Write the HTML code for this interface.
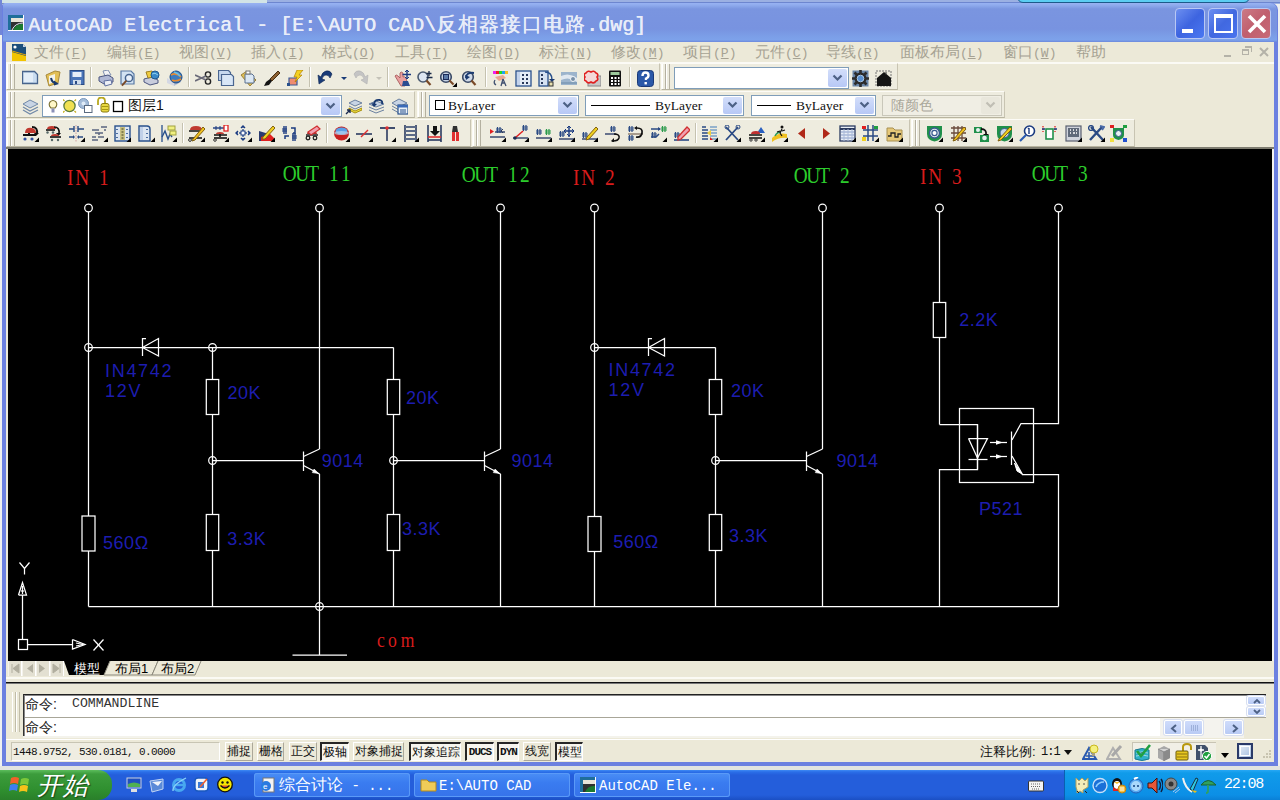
<!DOCTYPE html>
<html><head><meta charset="utf-8"><title>AutoCAD Electrical</title>
<style>
*{margin:0;padding:0;box-sizing:border-box}
html,body{width:1280px;height:800px;overflow:hidden}
body{position:relative;background:#eef0f0;font-family:"Liberation Sans",sans-serif}
.a{position:absolute}
.mono{font-family:"Liberation Mono",monospace}
.serif{font-family:"Liberation Serif",serif}
</style></head><body>

<div class="a" style="left:0;top:0;width:267px;height:4px;background:#d2e4e6;border-bottom:1px solid #7e9aa8"></div>
<div class="a" style="left:267px;top:0;width:1013px;height:4px;background:#9bb0e2"></div>
<div class="a" style="left:267px;top:2px;width:1013px;height:1px;background:#6d86cf"></div>
<div class="a" style="left:1017px;top:-6px;width:233px;height:9px;background:#5bcdf2;border:1px solid #1d5a8a;border-radius:0 0 6px 6px"></div>
<div class="a" style="left:0;top:0;width:2px;height:35px;background:#7186d8"></div>
<div class="a" style="left:2px;top:3px;width:1276px;height:763px;background:#6b80e0;border-radius:3px 7px 0 0"></div>
<div class="a" style="left:3px;top:3px;width:1274px;height:39px;border-radius:2px 7px 0 0;background:linear-gradient(#98b2f2 0px,#90acee 2px,#7a95e0 6px,#7893e0 26px,#7c9fe8 34px,#7da2ea 37px,#6c88dc 39px)"></div>
<div class="a" style="left:6px;top:42px;width:1268px;height:720px;background:#ece9d8"></div>
<div class="a" style="left:1272px;top:149px;width:2px;height:512px;background:#f4f3ee"></div>
<svg class="a" style="left:8px;top:15px" width="17" height="17" viewBox="0 0 17 17">
<rect x="0" y="0" width="16" height="16" fill="#fff"/>
<rect x="0" y="0" width="15" height="15" fill="#1f6e9a"/>
<rect x="3" y="3" width="12" height="4" fill="#e8e4d8"/>
<rect x="3" y="7" width="12" height="8" fill="#303030"/>
<path d="M5 15 Q8 8 15 9 L15 15Z" fill="#1b7a30"/>
<path d="M4 15 Q7 8 15 8" stroke="#dde" stroke-width="1" fill="none"/>
</svg>
<div class="a mono" style="left:28px;top:12px;font-size:20px;line-height:24px;color:#e8edf9;white-space:nowrap;text-shadow:0.5px 0 0 #e8edf9">AutoCAD Electrical - [E:\AUTO CAD\<span style="font-family:'Liberation Sans', sans-serif;font-size:20px;letter-spacing:1.43px">反相器接口电路</span>.dwg]</div>
<div class="a" style="left:1175px;top:8px;width:30px;height:31px;border:1px solid #b9c8f4;border-radius:4px;background:linear-gradient(135deg,#6d8ff0,#3d64e0 50%,#4a78f2)"><div class="a" style="left:6px;top:20px;width:11px;height:4px;background:#fff"></div></div>
<div class="a" style="left:1208px;top:8px;width:30px;height:31px;border:1px solid #b9c8f4;border-radius:4px;background:linear-gradient(135deg,#6d8ff0,#4168e0 50%,#4a74ee)"><div class="a" style="left:5px;top:5px;width:19px;height:19px;border:2px solid #fff;border-top-width:4px"></div></div>
<div class="a" style="left:1241px;top:8px;width:30px;height:31px;border:1px solid #b9c8f4;border-radius:4px;background:linear-gradient(135deg,#cc7a86,#c05f6e 50%,#c86a78)"><svg class="a" style="left:4px;top:4px" width="22" height="22"><path d="M3 3L19 19M19 3L3 19" stroke="#fff" stroke-width="3.6"/></svg></div>
<div class="a" style="left:6px;top:62px;width:1268px;height:2px;background:#fbfaf5"></div>
<svg class="a" style="left:11px;top:43px" width="17" height="19" viewBox="0 0 17 19">
<path d="M2 1 L12 1 L15 4 L15 17 L1 17 L1 1Z" fill="#1d4f7a"/>
<path d="M12 1 L15 4 L12 4Z" fill="#c8d4e4"/>
<path d="M1 9 L15 13 L15 18 L1 18Z" fill="#f2c400"/>
<path d="M1 8 L15 12" stroke="#e8a800" stroke-width="1"/>
<circle cx="4" cy="4" r="1.6" fill="#fff"/>
</svg>
<div class="a" style="left:34px;top:43px;height:18px;line-height:18px;color:#a6a293;white-space:nowrap"><span style="font-family:'Liberation Sans', sans-serif;font-size:15px">文件</span><span class="mono" style="font-size:13px">(<span style="text-decoration:underline">F</span>)</span></div>
<div class="a" style="left:107px;top:43px;height:18px;line-height:18px;color:#a6a293;white-space:nowrap"><span style="font-family:'Liberation Sans', sans-serif;font-size:15px">编辑</span><span class="mono" style="font-size:13px">(<span style="text-decoration:underline">E</span>)</span></div>
<div class="a" style="left:179px;top:43px;height:18px;line-height:18px;color:#a6a293;white-space:nowrap"><span style="font-family:'Liberation Sans', sans-serif;font-size:15px">视图</span><span class="mono" style="font-size:13px">(<span style="text-decoration:underline">V</span>)</span></div>
<div class="a" style="left:251px;top:43px;height:18px;line-height:18px;color:#a6a293;white-space:nowrap"><span style="font-family:'Liberation Sans', sans-serif;font-size:15px">插入</span><span class="mono" style="font-size:13px">(<span style="text-decoration:underline">I</span>)</span></div>
<div class="a" style="left:322px;top:43px;height:18px;line-height:18px;color:#a6a293;white-space:nowrap"><span style="font-family:'Liberation Sans', sans-serif;font-size:15px">格式</span><span class="mono" style="font-size:13px">(<span style="text-decoration:underline">O</span>)</span></div>
<div class="a" style="left:395px;top:43px;height:18px;line-height:18px;color:#a6a293;white-space:nowrap"><span style="font-family:'Liberation Sans', sans-serif;font-size:15px">工具</span><span class="mono" style="font-size:13px">(<span style="text-decoration:underline">T</span>)</span></div>
<div class="a" style="left:467px;top:43px;height:18px;line-height:18px;color:#a6a293;white-space:nowrap"><span style="font-family:'Liberation Sans', sans-serif;font-size:15px">绘图</span><span class="mono" style="font-size:13px">(<span style="text-decoration:underline">D</span>)</span></div>
<div class="a" style="left:539px;top:43px;height:18px;line-height:18px;color:#a6a293;white-space:nowrap"><span style="font-family:'Liberation Sans', sans-serif;font-size:15px">标注</span><span class="mono" style="font-size:13px">(<span style="text-decoration:underline">N</span>)</span></div>
<div class="a" style="left:611px;top:43px;height:18px;line-height:18px;color:#a6a293;white-space:nowrap"><span style="font-family:'Liberation Sans', sans-serif;font-size:15px">修改</span><span class="mono" style="font-size:13px">(<span style="text-decoration:underline">M</span>)</span></div>
<div class="a" style="left:683px;top:43px;height:18px;line-height:18px;color:#a6a293;white-space:nowrap"><span style="font-family:'Liberation Sans', sans-serif;font-size:15px">项目</span><span class="mono" style="font-size:13px">(<span style="text-decoration:underline">P</span>)</span></div>
<div class="a" style="left:755px;top:43px;height:18px;line-height:18px;color:#a6a293;white-space:nowrap"><span style="font-family:'Liberation Sans', sans-serif;font-size:15px">元件</span><span class="mono" style="font-size:13px">(<span style="text-decoration:underline">C</span>)</span></div>
<div class="a" style="left:826px;top:43px;height:18px;line-height:18px;color:#a6a293;white-space:nowrap"><span style="font-family:'Liberation Sans', sans-serif;font-size:15px">导线</span><span class="mono" style="font-size:13px">(<span style="text-decoration:underline">R</span>)</span></div>
<div class="a" style="left:900px;top:43px;height:18px;line-height:18px;color:#a6a293;white-space:nowrap"><span style="font-family:'Liberation Sans', sans-serif;font-size:15px">面板布局</span><span class="mono" style="font-size:13px">(<span style="text-decoration:underline">L</span>)</span></div>
<div class="a" style="left:1003px;top:43px;height:18px;line-height:18px;color:#a6a293;white-space:nowrap"><span style="font-family:'Liberation Sans', sans-serif;font-size:15px">窗口</span><span class="mono" style="font-size:13px">(<span style="text-decoration:underline">W</span>)</span></div>
<div class="a" style="left:1076px;top:43px;height:18px;line-height:18px;color:#a6a293;white-space:nowrap"><span style="font-family:'Liberation Sans', sans-serif;font-size:15px">帮助</span></div>
<div class="a" style="left:1224px;top:55px;width:7px;height:2px;background:#b4b2a8"></div>
<div class="a" style="left:1242px;top:49px;width:7px;height:6px;border:1px solid #b4b2a8;border-top-width:2px"></div>
<div class="a" style="left:1245px;top:46px;width:7px;height:6px;border:1px solid #b4b2a8;border-top-width:2px;border-left:none;border-bottom:none"></div>
<svg class="a" style="left:1259px;top:47px" width="10" height="10"><path d="M1 1L9 9M9 1L1 9" stroke="#b4b2a8" stroke-width="2"/></svg>
<div class="a" style="left:6px;top:63px;width:654px;height:27px;background:#eeecdf;border-top:1px solid #fcfbf6;border-left:1px solid #fcfbf6;border-bottom:1px solid #b8b4a0;border-right:1px solid #c8c4b2"></div>
<div class="a" style="left:7px;top:64px;width:4px;height:25px;border-left:1px solid #fff;border-right:1px solid #b4b0a0"></div>
<div class="a" style="left:11px;top:64px;width:4px;height:25px;border-left:1px solid #fff;border-right:1px solid #b4b0a0"></div>
<div class="a" style="left:661px;top:63px;width:237px;height:27px;background:#eeecdf;border-top:1px solid #fcfbf6;border-left:1px solid #fcfbf6;border-bottom:1px solid #b8b4a0;border-right:1px solid #c8c4b2"></div>
<div class="a" style="left:662px;top:64px;width:4px;height:25px;border-left:1px solid #fff;border-right:1px solid #b4b0a0"></div>
<div class="a" style="left:666px;top:64px;width:4px;height:25px;border-left:1px solid #fff;border-right:1px solid #b4b0a0"></div>
<div class="a" style="left:6px;top:91px;width:409px;height:27px;background:#eeecdf;border-top:1px solid #fcfbf6;border-left:1px solid #fcfbf6;border-bottom:1px solid #b8b4a0;border-right:1px solid #c8c4b2"></div>
<div class="a" style="left:7px;top:92px;width:4px;height:25px;border-left:1px solid #fff;border-right:1px solid #b4b0a0"></div>
<div class="a" style="left:11px;top:92px;width:4px;height:25px;border-left:1px solid #fff;border-right:1px solid #b4b0a0"></div>
<div class="a" style="left:417px;top:91px;width:588px;height:27px;background:#eeecdf;border-top:1px solid #fcfbf6;border-left:1px solid #fcfbf6;border-bottom:1px solid #b8b4a0;border-right:1px solid #c8c4b2"></div>
<div class="a" style="left:418px;top:92px;width:4px;height:25px;border-left:1px solid #fff;border-right:1px solid #b4b0a0"></div>
<div class="a" style="left:422px;top:92px;width:4px;height:25px;border-left:1px solid #fff;border-right:1px solid #b4b0a0"></div>
<div class="a" style="left:6px;top:119px;width:465px;height:28px;background:#eeecdf;border-top:1px solid #fcfbf6;border-left:1px solid #fcfbf6;border-bottom:1px solid #b8b4a0;border-right:1px solid #c8c4b2"></div>
<div class="a" style="left:7px;top:120px;width:4px;height:26px;border-left:1px solid #fff;border-right:1px solid #b4b0a0"></div>
<div class="a" style="left:11px;top:120px;width:4px;height:26px;border-left:1px solid #fff;border-right:1px solid #b4b0a0"></div>
<div class="a" style="left:472px;top:119px;width:438px;height:28px;background:#eeecdf;border-top:1px solid #fcfbf6;border-left:1px solid #fcfbf6;border-bottom:1px solid #b8b4a0;border-right:1px solid #c8c4b2"></div>
<div class="a" style="left:473px;top:120px;width:4px;height:26px;border-left:1px solid #fff;border-right:1px solid #b4b0a0"></div>
<div class="a" style="left:477px;top:120px;width:4px;height:26px;border-left:1px solid #fff;border-right:1px solid #b4b0a0"></div>
<div class="a" style="left:911px;top:119px;width:224px;height:28px;background:#eeecdf;border-top:1px solid #fcfbf6;border-left:1px solid #fcfbf6;border-bottom:1px solid #b8b4a0;border-right:1px solid #c8c4b2"></div>
<div class="a" style="left:912px;top:120px;width:4px;height:26px;border-left:1px solid #fff;border-right:1px solid #b4b0a0"></div>
<div class="a" style="left:916px;top:120px;width:4px;height:26px;border-left:1px solid #fff;border-right:1px solid #b4b0a0"></div>
<div class="a" style="left:6px;top:147px;width:1268px;height:2px;background:#7e7c70"></div>
<div class="a" style="left:674px;top:67px;width:175px;height:22px;background:#fff;border:1px solid #7f9db9"><div class="a" style="right:1px;top:1px;width:19px;height:18px;background:linear-gradient(#d3defa,#b7c8f6);border-radius:2px"><svg class="a" style="left:4px;top:5px" width="11" height="8"><path d="M1.5 1.5L5.5 5.5L9.5 1.5" stroke="#4d6185" stroke-width="2.2" fill="none"/></svg></div></div>
<div class="a" style="left:42px;top:95px;width:300px;height:22px;background:#fff;border:1px solid #7f9db9"><div class="a" style="right:1px;top:1px;width:19px;height:18px;background:linear-gradient(#d3defa,#b7c8f6);border-radius:2px"><svg class="a" style="left:4px;top:5px" width="11" height="8"><path d="M1.5 1.5L5.5 5.5L9.5 1.5" stroke="#4d6185" stroke-width="2.2" fill="none"/></svg></div></div>
<div class="a" style="left:429px;top:95px;width:150px;height:21px;background:#fff;border:1px solid #7f9db9"><div class="a" style="left:5px;top:4px;width:10px;height:10px;border:1px solid #000"></div><div class="a serif" style="left:18px;top:2px;font-size:13.5px;color:#111;line-height:16px">ByLayer</div><div class="a" style="right:1px;top:1px;width:19px;height:17px;background:linear-gradient(#d3defa,#b7c8f6);border-radius:2px"><svg class="a" style="left:4px;top:4px" width="11" height="8"><path d="M1.5 1.5L5.5 5.5L9.5 1.5" stroke="#4d6185" stroke-width="2.2" fill="none"/></svg></div></div>
<div class="a" style="left:585px;top:95px;width:159px;height:21px;background:#fff;border:1px solid #7f9db9"><div class="a" style="left:5px;top:9px;width:59px;height:1px;background:#000"></div><div class="a serif" style="left:69px;top:2px;font-size:13.5px;color:#111;line-height:16px">ByLayer</div><div class="a" style="right:1px;top:1px;width:19px;height:17px;background:linear-gradient(#d3defa,#b7c8f6);border-radius:2px"><svg class="a" style="left:4px;top:4px" width="11" height="8"><path d="M1.5 1.5L5.5 5.5L9.5 1.5" stroke="#4d6185" stroke-width="2.2" fill="none"/></svg></div></div>
<div class="a" style="left:751px;top:95px;width:125px;height:21px;background:#fff;border:1px solid #7f9db9"><div class="a" style="left:5px;top:9px;width:34px;height:1px;background:#000"></div><div class="a serif" style="left:44px;top:2px;font-size:13.5px;color:#111;line-height:16px">ByLayer</div><div class="a" style="right:1px;top:1px;width:19px;height:17px;background:linear-gradient(#d3defa,#b7c8f6);border-radius:2px"><svg class="a" style="left:4px;top:4px" width="11" height="8"><path d="M1.5 1.5L5.5 5.5L9.5 1.5" stroke="#4d6185" stroke-width="2.2" fill="none"/></svg></div></div>
<div class="a" style="left:882px;top:95px;width:120px;height:21px;background:#f0eee4;border:1px solid #c9c7ba"><div class="a" style="left:8px;top:1px;font-size:14px;color:#aaa79a;line-height:17px;font-family:'Liberation Sans', sans-serif">随颜色</div><div class="a" style="right:1px;top:1px;width:19px;height:17px;background:#e9e7dc;border-radius:2px"><svg class="a" style="left:4px;top:4px" width="11" height="8"><path d="M1.5 1.5L5.5 5.5L9.5 1.5" stroke="#c0beb4" stroke-width="2.2" fill="none"/></svg></div></div>
<div class="a" style="left:8px;top:149px;width:1264px;height:512px;background:#000"></div>
<svg class="a" style="left:0;top:0" width="1280" height="800" viewBox="0 0 1280 800"><g stroke="#fff" stroke-width="1.25" fill="none"><line x1="88.50" y1="208.00" x2="88.50" y2="606.50"/><line x1="88.50" y1="347.50" x2="393.50" y2="347.50"/><line x1="393.50" y1="347.50" x2="393.50" y2="606.50"/><line x1="212.50" y1="347.50" x2="212.50" y2="606.50"/><line x1="319.50" y1="208.00" x2="319.50" y2="449.00"/><line x1="319.50" y1="474.00" x2="319.50" y2="655.00"/><line x1="500.50" y1="208.00" x2="500.50" y2="449.00"/><line x1="500.50" y1="474.00" x2="500.50" y2="606.50"/><line x1="88.50" y1="606.50" x2="1058.50" y2="606.50"/><line x1="292.50" y1="655.00" x2="347.00" y2="655.00"/><line x1="212.50" y1="460.50" x2="303.50" y2="460.50"/><line x1="393.50" y1="460.50" x2="484.50" y2="460.50"/><line x1="594.50" y1="208.00" x2="594.50" y2="606.50"/><line x1="594.50" y1="347.50" x2="715.50" y2="347.50"/><line x1="715.50" y1="347.50" x2="715.50" y2="606.50"/><line x1="822.50" y1="208.00" x2="822.50" y2="449.00"/><line x1="822.50" y1="474.00" x2="822.50" y2="606.50"/><line x1="715.50" y1="460.50" x2="806.50" y2="460.50"/><line x1="939.50" y1="208.00" x2="939.50" y2="424.50"/><polyline points="939.50,424.50 977.50,424.50 977.50,469.50 939.50,469.50 939.50,606.50" fill="none"/><polyline points="1058.50,208.00 1058.50,423.50 1021.00,423.50 1012.00,440.00" fill="none"/><polyline points="1012.00,456.00 1022.50,474.50 1058.50,474.50 1058.50,606.50" fill="none"/><rect x="82.00" y="516.00" width="13.00" height="35.00" fill="#000"/><rect x="206.30" y="379.50" width="12.40" height="35.00" fill="#000"/><rect x="206.30" y="514.50" width="12.40" height="36.00" fill="#000"/><rect x="387.30" y="379.50" width="12.40" height="35.00" fill="#000"/><rect x="387.30" y="514.50" width="12.40" height="36.00" fill="#000"/><rect x="588.00" y="516.50" width="13.00" height="35.00" fill="#000"/><rect x="709.30" y="379.50" width="12.40" height="35.00" fill="#000"/><rect x="709.30" y="514.50" width="12.40" height="36.00" fill="#000"/><rect x="933.30" y="302.50" width="12.40" height="35.00" fill="#000"/><polyline points="146.00,338.50 142.50,338.50 142.50,356.00" fill="none"/><polyline points="142.50,347.50 158.50,338.50 158.50,356.00 142.50,347.50" fill="none"/><polyline points="652.00,338.50 648.50,338.50 648.50,356.00" fill="none"/><polyline points="648.50,347.50 664.50,338.50 664.50,356.00 648.50,347.50" fill="none"/><line x1="303.50" y1="451.50" x2="303.50" y2="471.00"/><line x1="303.50" y1="456.50" x2="319.50" y2="449.00"/><line x1="303.50" y1="465.50" x2="319.50" y2="474.00"/><path d="M318.70 473.6 L312.30 472.6 L314.10 469.0Z" fill="#fff" stroke="#fff" stroke-width="0.6"/><line x1="484.50" y1="451.50" x2="484.50" y2="471.00"/><line x1="484.50" y1="456.50" x2="500.50" y2="449.00"/><line x1="484.50" y1="465.50" x2="500.50" y2="474.00"/><path d="M499.70 473.6 L493.30 472.6 L495.10 469.0Z" fill="#fff" stroke="#fff" stroke-width="0.6"/><line x1="806.50" y1="451.50" x2="806.50" y2="471.00"/><line x1="806.50" y1="456.50" x2="822.50" y2="449.00"/><line x1="806.50" y1="465.50" x2="822.50" y2="474.00"/><path d="M821.70 473.6 L815.30 472.6 L817.10 469.0Z" fill="#fff" stroke="#fff" stroke-width="0.6"/><circle cx="88.50" cy="208.00" r="3.80" fill="#000"/><circle cx="319.50" cy="208.00" r="3.80" fill="#000"/><circle cx="500.50" cy="208.00" r="3.80" fill="#000"/><circle cx="594.50" cy="208.00" r="3.80" fill="#000"/><circle cx="822.50" cy="208.00" r="3.80" fill="#000"/><circle cx="939.50" cy="208.00" r="3.80" fill="#000"/><circle cx="1058.50" cy="208.00" r="3.80" fill="#000"/><circle cx="88.50" cy="347.50" r="3.80" fill="none"/><circle cx="212.50" cy="347.50" r="3.80" fill="none"/><circle cx="594.50" cy="347.50" r="3.80" fill="none"/><circle cx="212.50" cy="460.50" r="3.80" fill="none"/><circle cx="393.50" cy="460.50" r="3.80" fill="none"/><circle cx="715.50" cy="460.50" r="3.80" fill="none"/><circle cx="319.50" cy="606.50" r="3.80" fill="none"/><rect x="959.50" y="408.50" width="74.00" height="74.00" fill="none"/><polyline points="968.50,438.50 987.50,438.50 977.50,458.00 968.50,438.50" fill="none"/><line x1="968.50" y1="459.50" x2="987.50" y2="459.50"/><line x1="977.50" y1="424.50" x2="977.50" y2="469.50"/><line x1="990.00" y1="442.50" x2="1007.00" y2="442.50"/><path d="M996 440.3 L1003 442.5 L996 444.7 Z" fill="#fff" stroke="none"/><line x1="990.00" y1="456.50" x2="1007.00" y2="456.50"/><path d="M996 454.3 L1003 456.5 L996 458.7 Z" fill="#fff" stroke="none"/><line x1="1011.50" y1="431.50" x2="1011.50" y2="465.00"/><path d="M1014.5 463 L1022 474 L1017 471 Z" fill="#fff" stroke="#fff" stroke-width="1"/><rect x="18.50" y="639.50" width="9.00" height="10.00" fill="#000"/><line x1="22.50" y1="639.50" x2="22.50" y2="595.00"/><polyline points="18.50,595.00 26.50,595.00 22.50,582.50 18.50,595.00" fill="none"/><line x1="22.50" y1="586.00" x2="22.50" y2="594.00"/><line x1="21.00" y1="591.00" x2="24.00" y2="591.00"/><line x1="28.00" y1="644.50" x2="72.50" y2="644.50"/><polyline points="72.50,639.50 72.50,649.00 85.00,644.50 72.50,639.50" fill="none"/><line x1="76.00" y1="643.00" x2="83.00" y2="644.50"/><line x1="76.00" y1="646.00" x2="83.00" y2="644.50"/><polyline points="19.50,562.50 24.50,568.50 29.50,562.50" fill="none"/><line x1="24.50" y1="568.50" x2="24.50" y2="574.50"/><line x1="93.50" y1="639.50" x2="103.50" y2="650.50"/><line x1="103.50" y1="639.50" x2="93.50" y2="650.50"/></g></svg><div class="a serif" style="left:63.0px;top:166.5px;font-size:23.0px;line-height:22px;color:#d81c1c;white-space:nowrap"><span style="display:inline-block;width:11.50px;text-align:center"><span style="display:inline-block;transform:translateX(1.5px) scaleX(0.84)">I</span></span><span style="display:inline-block;width:11.50px;text-align:center"><span style="display:inline-block;transform:translateX(-1.0px) scaleX(0.84)">N</span></span><span style="display:inline-block;width:11.50px;text-align:center"><span style="display:inline-block;transform:translateX(0.0px) scaleX(0.84)">&nbsp;</span></span><span style="display:inline-block;width:11.50px;text-align:center"><span style="display:inline-block;transform:translateX(0.0px) scaleX(0.84)">1</span></span></div><div class="a serif" style="left:282.1px;top:163.0px;font-size:23.0px;line-height:22px;color:#2ccc2c;white-space:nowrap"><span style="display:inline-block;width:11.50px;text-align:center"><span style="display:inline-block;transform:translateX(-0.5px) scaleX(0.84)">O</span></span><span style="display:inline-block;width:11.50px;text-align:center"><span style="display:inline-block;transform:translateX(0.0px) scaleX(0.84)">U</span></span><span style="display:inline-block;width:11.50px;text-align:center"><span style="display:inline-block;transform:translateX(1.0px) scaleX(0.84)">T</span></span><span style="display:inline-block;width:11.50px;text-align:center"><span style="display:inline-block;transform:translateX(0.0px) scaleX(0.84)">&nbsp;</span></span><span style="display:inline-block;width:11.50px;text-align:center"><span style="display:inline-block;transform:translateX(0.0px) scaleX(0.84)">1</span></span><span style="display:inline-block;width:11.50px;text-align:center"><span style="display:inline-block;transform:translateX(0.0px) scaleX(0.84)">1</span></span></div><div class="a serif" style="left:461.4px;top:163.5px;font-size:23.0px;line-height:22px;color:#2ccc2c;white-space:nowrap"><span style="display:inline-block;width:11.50px;text-align:center"><span style="display:inline-block;transform:translateX(-0.5px) scaleX(0.84)">O</span></span><span style="display:inline-block;width:11.50px;text-align:center"><span style="display:inline-block;transform:translateX(0.0px) scaleX(0.84)">U</span></span><span style="display:inline-block;width:11.50px;text-align:center"><span style="display:inline-block;transform:translateX(1.0px) scaleX(0.84)">T</span></span><span style="display:inline-block;width:11.50px;text-align:center"><span style="display:inline-block;transform:translateX(0.0px) scaleX(0.84)">&nbsp;</span></span><span style="display:inline-block;width:11.50px;text-align:center"><span style="display:inline-block;transform:translateX(0.0px) scaleX(0.84)">1</span></span><span style="display:inline-block;width:11.50px;text-align:center"><span style="display:inline-block;transform:translateX(0.0px) scaleX(0.84)">2</span></span></div><div class="a serif" style="left:569.0px;top:166.5px;font-size:23.0px;line-height:22px;color:#d81c1c;white-space:nowrap"><span style="display:inline-block;width:11.50px;text-align:center"><span style="display:inline-block;transform:translateX(1.5px) scaleX(0.84)">I</span></span><span style="display:inline-block;width:11.50px;text-align:center"><span style="display:inline-block;transform:translateX(-1.0px) scaleX(0.84)">N</span></span><span style="display:inline-block;width:11.50px;text-align:center"><span style="display:inline-block;transform:translateX(0.0px) scaleX(0.84)">&nbsp;</span></span><span style="display:inline-block;width:11.50px;text-align:center"><span style="display:inline-block;transform:translateX(0.0px) scaleX(0.84)">2</span></span></div><div class="a serif" style="left:793.2px;top:164.5px;font-size:23.0px;line-height:22px;color:#2ccc2c;white-space:nowrap"><span style="display:inline-block;width:11.50px;text-align:center"><span style="display:inline-block;transform:translateX(-0.5px) scaleX(0.84)">O</span></span><span style="display:inline-block;width:11.50px;text-align:center"><span style="display:inline-block;transform:translateX(0.0px) scaleX(0.84)">U</span></span><span style="display:inline-block;width:11.50px;text-align:center"><span style="display:inline-block;transform:translateX(1.0px) scaleX(0.84)">T</span></span><span style="display:inline-block;width:11.50px;text-align:center"><span style="display:inline-block;transform:translateX(0.0px) scaleX(0.84)">&nbsp;</span></span><span style="display:inline-block;width:11.50px;text-align:center"><span style="display:inline-block;transform:translateX(0.0px) scaleX(0.84)">2</span></span></div><div class="a serif" style="left:916.5px;top:165.5px;font-size:23.0px;line-height:22px;color:#d81c1c;white-space:nowrap"><span style="display:inline-block;width:11.50px;text-align:center"><span style="display:inline-block;transform:translateX(1.5px) scaleX(0.84)">I</span></span><span style="display:inline-block;width:11.50px;text-align:center"><span style="display:inline-block;transform:translateX(-1.0px) scaleX(0.84)">N</span></span><span style="display:inline-block;width:11.50px;text-align:center"><span style="display:inline-block;transform:translateX(0.0px) scaleX(0.84)">&nbsp;</span></span><span style="display:inline-block;width:11.50px;text-align:center"><span style="display:inline-block;transform:translateX(0.0px) scaleX(0.84)">3</span></span></div><div class="a serif" style="left:1031.2px;top:163.0px;font-size:23.0px;line-height:22px;color:#2ccc2c;white-space:nowrap"><span style="display:inline-block;width:11.50px;text-align:center"><span style="display:inline-block;transform:translateX(-0.5px) scaleX(0.84)">O</span></span><span style="display:inline-block;width:11.50px;text-align:center"><span style="display:inline-block;transform:translateX(0.0px) scaleX(0.84)">U</span></span><span style="display:inline-block;width:11.50px;text-align:center"><span style="display:inline-block;transform:translateX(1.0px) scaleX(0.84)">T</span></span><span style="display:inline-block;width:11.50px;text-align:center"><span style="display:inline-block;transform:translateX(0.0px) scaleX(0.84)">&nbsp;</span></span><span style="display:inline-block;width:11.50px;text-align:center"><span style="display:inline-block;transform:translateX(0.0px) scaleX(0.84)">3</span></span></div><div class="a serif" style="left:375.5px;top:629.0px;font-size:22.0px;line-height:22px;color:#d81c1c;white-space:nowrap"><span style="display:inline-block;width:11.60px;text-align:center"><span style="display:inline-block;transform:translateX(0.0px) scaleX(0.80)">c</span></span><span style="display:inline-block;width:11.60px;text-align:center"><span style="display:inline-block;transform:translateX(0.0px) scaleX(0.80)">o</span></span><span style="display:inline-block;width:11.60px;text-align:center"><span style="display:inline-block;transform:translateX(0.0px) scaleX(0.80)">m</span></span></div><div class="a" style="left:105.0px;top:362.0px;font-size:18.0px;line-height:18px;color:#1d1db0;white-space:nowrap;letter-spacing:1.70px">IN4742</div><div class="a" style="left:105.0px;top:382.0px;font-size:18.0px;line-height:18px;color:#1d1db0;white-space:nowrap;letter-spacing:1.80px">12V</div><div class="a" style="left:608.5px;top:360.5px;font-size:18.0px;line-height:18px;color:#1d1db0;white-space:nowrap;letter-spacing:1.70px">IN4742</div><div class="a" style="left:608.5px;top:381.0px;font-size:18.0px;line-height:18px;color:#1d1db0;white-space:nowrap;letter-spacing:1.80px">12V</div><div class="a" style="left:227.5px;top:383.5px;font-size:18.0px;line-height:18px;color:#1d1db0;white-space:nowrap;letter-spacing:0.50px">20K</div><div class="a" style="left:406.0px;top:388.5px;font-size:18.0px;line-height:18px;color:#1d1db0;white-space:nowrap;letter-spacing:0.50px">20K</div><div class="a" style="left:731.0px;top:382.3px;font-size:18.0px;line-height:18px;color:#1d1db0;white-space:nowrap;letter-spacing:0.50px">20K</div><div class="a" style="left:321.8px;top:451.9px;font-size:18.0px;line-height:18px;color:#1d1db0;white-space:nowrap;letter-spacing:0.50px">9014</div><div class="a" style="left:511.4px;top:451.9px;font-size:18.0px;line-height:18px;color:#1d1db0;white-space:nowrap;letter-spacing:0.50px">9014</div><div class="a" style="left:836.5px;top:451.7px;font-size:18.0px;line-height:18px;color:#1d1db0;white-space:nowrap;letter-spacing:0.50px">9014</div><div class="a" style="left:103.1px;top:533.5px;font-size:18.0px;line-height:18px;color:#1d1db0;white-space:nowrap;letter-spacing:0.50px">560&Omega;</div><div class="a" style="left:613.2px;top:532.5px;font-size:18.0px;line-height:18px;color:#1d1db0;white-space:nowrap;letter-spacing:0.50px">560&Omega;</div><div class="a" style="left:227.3px;top:529.5px;font-size:18.0px;line-height:18px;color:#1d1db0;white-space:nowrap;letter-spacing:0.50px">3.3K</div><div class="a" style="left:402.0px;top:520.0px;font-size:18.0px;line-height:18px;color:#1d1db0;white-space:nowrap;letter-spacing:0.50px">3.3K</div><div class="a" style="left:729.0px;top:527.0px;font-size:18.0px;line-height:18px;color:#1d1db0;white-space:nowrap;letter-spacing:0.50px">3.3K</div><div class="a" style="left:959.2px;top:311.3px;font-size:18.0px;line-height:18px;color:#1d1db0;white-space:nowrap;letter-spacing:0.50px">2.2K</div><div class="a" style="left:979.0px;top:500.0px;font-size:18.0px;line-height:18px;color:#1d1db0;white-space:nowrap;letter-spacing:0.50px">P521</div>
<div class="a" style="left:6px;top:661px;width:1268px;height:15px;background:#ece9d8"></div>
<div class="a" style="left:8px;top:661px;width:14px;height:15px;background:#e3e0d2;border-right:1px solid #fff;border-left:1px solid #f4f2ea"></div>
<div class="a" style="left:22px;top:661px;width:14px;height:15px;background:#e3e0d2;border-right:1px solid #fff;border-left:1px solid #f4f2ea"></div>
<div class="a" style="left:36px;top:661px;width:14px;height:15px;background:#e3e0d2;border-right:1px solid #fff;border-left:1px solid #f4f2ea"></div>
<div class="a" style="left:50px;top:661px;width:14px;height:15px;background:#e3e0d2;border-right:1px solid #fff;border-left:1px solid #f4f2ea"></div>
<svg class="a" style="left:8px;top:661px" width="56" height="15"><path d="M4 3v9M11 3v9L5 7.5Z" fill="#b1ae9f" stroke="#b1ae9f"/><path d="M25 3v9L19 7.5Z" fill="#b1ae9f"/><path d="M31 3v9L37 7.5Z" fill="#b1ae9f"/><path d="M45 3v9L51 7.5ZM52 3v9" fill="#b1ae9f" stroke="#b1ae9f"/></svg>
<svg class="a" style="left:62px;top:661px" width="145" height="16"><path d="M2 0 L48 0 L42 14 L7 14Z" fill="#000"/><path d="M48 0 L42 14 L90 14 L96 0" fill="#ece9d8" stroke="#8a877a" stroke-width="1"/><path d="M96 0 L90 14 L133 14 L139 0" fill="#ece9d8" stroke="#8a877a" stroke-width="1"/></svg>
<div class="a" style="left:74px;top:661px;font-size:13px;line-height:15px;color:#fff;font-family:'Liberation Sans', sans-serif">模型</div>
<div class="a" style="left:115px;top:661px;font-size:13px;line-height:15px;color:#000;font-family:'Liberation Sans', sans-serif">布局1</div>
<div class="a" style="left:161px;top:661px;font-size:13px;line-height:15px;color:#000;font-family:'Liberation Sans', sans-serif">布局2</div>
<div class="a" style="left:6px;top:677px;width:1268px;height:2px;background:#fbfaf4"></div>
<div class="a" style="left:6px;top:682px;width:1268px;height:1px;background:#111"></div>
<div class="a" style="left:6px;top:683px;width:1268px;height:1px;background:#777"></div>
<div class="a" style="left:12px;top:692px;width:4px;height:40px;border-left:1px solid #fff;border-right:1px solid #c0bca8"></div>
<div class="a" style="left:16px;top:692px;width:4px;height:40px;border-left:1px solid #fff;border-right:1px solid #c0bca8"></div>
<div class="a" style="left:23px;top:694px;width:1243px;height:43px;background:#fff;border-top:1px solid #222;border-left:1px solid #333;box-shadow:inset 1px 1px 0 #888"></div>
<div class="a" style="left:25px;top:717px;width:1241px;height:1px;background:#a8a698"></div>
<div class="a" style="left:23px;top:736px;width:1243px;height:2px;background:#f4f3ec"></div>
<div class="a" style="left:25px;top:697px;font-size:13px;line-height:14px;color:#222;white-space:nowrap"><span style="font-family:'Liberation Sans', sans-serif;font-size:14px">命令:</span></div>
<div class="a mono" style="left:72px;top:697px;font-size:13.2px;line-height:14px;color:#333;white-space:nowrap">COMMANDLINE</div>
<div class="a" style="left:25px;top:720px;font-size:13px;line-height:14px;color:#222;white-space:nowrap"><span style="font-family:'Liberation Sans', sans-serif;font-size:14px">命令:</span></div>
<div class="a" style="left:1247px;top:696px;width:18px;height:9px;background:linear-gradient(#cfdcfb,#b9cbf5);border:1px solid #fff;border-radius:2px;box-shadow:0 0 0 1px #d8dff0"><svg class="a" style="left:5px;top:1px" width="8" height="6"><path d="M1 5L4 2L7 5" stroke="#4d6185" stroke-width="1.8" fill="none"/></svg></div>
<div class="a" style="left:1247px;top:707px;width:18px;height:9px;background:linear-gradient(#cfdcfb,#b9cbf5);border:1px solid #fff;border-radius:2px;box-shadow:0 0 0 1px #d8dff0"><svg class="a" style="left:5px;top:1px" width="8" height="6"><path d="M1 1L4 4L7 1" stroke="#4d6185" stroke-width="1.8" fill="none"/></svg></div>
<div class="a" style="left:1160px;top:718px;width:84px;height:19px;background:#f4f3ee"></div>
<div class="a" style="left:1244px;top:718px;width:24px;height:20px;background:#ece9d8"></div>
<div class="a" style="left:1164px;top:720px;width:18px;height:15px;background:linear-gradient(#cfdcfb,#b9cbf5);border:1px solid #fff;border-radius:2px;box-shadow:0 0 0 1px #d8dff0"><svg class="a" style="left:5px;top:3px" width="8" height="9"><path d="M6 1L2 4.5L6 8" stroke="#4d6185" stroke-width="2" fill="none"/></svg></div>
<div class="a" style="left:1184px;top:720px;width:19px;height:15px;background:linear-gradient(#cfdcfb,#b9cbf5);border:1px solid #fff;border-radius:2px;box-shadow:0 0 0 1px #d8dff0"><div class="a" style="left:6px;top:4px;width:7px;height:6px;border-left:1px solid #9db0da;border-right:1px solid #9db0da"></div><div class="a" style="left:8px;top:4px;width:3px;height:6px;border-left:1px solid #9db0da;border-right:1px solid #9db0da"></div></div>
<div class="a" style="left:1224px;top:720px;width:19px;height:15px;background:linear-gradient(#cfdcfb,#b9cbf5);border:1px solid #fff;border-radius:2px;box-shadow:0 0 0 1px #d8dff0"><svg class="a" style="left:6px;top:3px" width="8" height="9"><path d="M2 1L6 4.5L2 8" stroke="#4d6185" stroke-width="2" fill="none"/></svg></div>
<div class="a" style="left:6px;top:739px;width:1266px;height:1px;background:#fff"></div>
<div class="a" style="left:11px;top:742px;width:209px;height:19px;background:#efede2;border:1px solid #c8c5b4;border-right-color:#fff;border-bottom-color:#fff"></div>
<div class="a mono" style="left:13px;top:746px;font-size:11px;line-height:13px;color:#111;white-space:nowrap;letter-spacing:-0.6px">1448.9752, 530.0181, 0.0000</div>
<div class="a" style="left:225px;top:742px;width:28px;height:19px;background:#ece9d8;border:1px solid #fff;border-right-color:#aca899;border-bottom-color:#aca899;text-align:center;line-height:16px;color:#111;white-space:nowrap;font-family:'Liberation Sans', sans-serif;font-size:12px">捕捉</div>
<div class="a" style="left:257px;top:742px;width:27px;height:19px;background:#ece9d8;border:1px solid #fff;border-right-color:#aca899;border-bottom-color:#aca899;text-align:center;line-height:16px;color:#111;white-space:nowrap;font-family:'Liberation Sans', sans-serif;font-size:12px">栅格</div>
<div class="a" style="left:289px;top:742px;width:28px;height:19px;background:#ece9d8;border:1px solid #fff;border-right-color:#aca899;border-bottom-color:#aca899;text-align:center;line-height:16px;color:#111;white-space:nowrap;font-family:'Liberation Sans', sans-serif;font-size:12px">正交</div>
<div class="a" style="left:320px;top:742px;width:29px;height:19px;background:#f6f5ee;border:1px solid #fff;border-top:2px solid #262626;border-left:2px solid #262626;text-align:center;line-height:16px;color:#111;white-space:nowrap;font-family:'Liberation Sans', sans-serif;font-size:12px">极轴</div>
<div class="a" style="left:353px;top:742px;width:51px;height:19px;background:#ece9d8;border:1px solid #fff;border-right-color:#aca899;border-bottom-color:#aca899;text-align:center;line-height:16px;color:#111;white-space:nowrap;font-family:'Liberation Sans', sans-serif;font-size:12px">对象捕捉</div>
<div class="a" style="left:409px;top:742px;width:52px;height:19px;background:#f6f5ee;border:1px solid #fff;border-top:2px solid #262626;border-left:2px solid #262626;text-align:center;line-height:16px;color:#111;white-space:nowrap;font-family:'Liberation Sans', sans-serif;font-size:12px">对象追踪</div>
<div class="a" style="left:465px;top:742px;width:29px;height:19px;background:#f6f5ee;border:1px solid #fff;border-top:2px solid #262626;border-left:2px solid #262626;text-align:center;line-height:16px;color:#111;white-space:nowrap;font-family:'Liberation Mono',monospace;font-size:11px;letter-spacing:-1px;font-weight:bold">DUCS</div>
<div class="a" style="left:497px;top:742px;width:22px;height:19px;background:#f6f5ee;border:1px solid #fff;border-top:2px solid #262626;border-left:2px solid #262626;text-align:center;line-height:16px;color:#111;white-space:nowrap;font-family:'Liberation Mono',monospace;font-size:11px;letter-spacing:-1px;font-weight:bold">DYN</div>
<div class="a" style="left:523px;top:742px;width:28px;height:19px;background:#ece9d8;border:1px solid #fff;border-right-color:#aca899;border-bottom-color:#aca899;text-align:center;line-height:16px;color:#111;white-space:nowrap;font-family:'Liberation Sans', sans-serif;font-size:12px">线宽</div>
<div class="a" style="left:555px;top:742px;width:28px;height:19px;background:#f6f5ee;border:1px solid #fff;border-top:2px solid #262626;border-left:2px solid #262626;text-align:center;line-height:16px;color:#111;white-space:nowrap;font-family:'Liberation Sans', sans-serif;font-size:12px">模型</div>
<div class="a" style="left:980px;top:744px;font-size:13px;line-height:15px;color:#111;white-space:nowrap;font-family:'Liberation Sans', sans-serif">注释比例:</div>
<div class="a mono" style="left:1041px;top:745px;font-size:12px;line-height:15px;color:#111;letter-spacing:-1px">1:1</div>
<svg class="a" style="left:1064px;top:750px" width="8" height="5"><path d="M0 0H8L4 5Z" fill="#111"/></svg>
<svg class="a" style="left:1082px;top:744px" width="17" height="17" viewBox="0 0 17 17"><path d="M7 4l-6 11h13z" fill="none" stroke="#2a5ab0" stroke-width="2"/><path d="M4 12h7M7 8v6" stroke="#2a5ab0" stroke-width="1.6"/><circle cx="12" cy="5" r="4" fill="#f4f080" stroke="#c8b820"/><rect x="10" y="9" width="3" height="3" fill="#a8a080"/></svg><svg class="a" style="left:1106px;top:744px" width="17" height="17" viewBox="0 0 17 17"><path d="M7 4l-6 11h13z" fill="none" stroke="#b0b0b0" stroke-width="2"/><path d="M6 12l9-10" stroke="#a8a8a8" stroke-width="3"/></svg><div class="a" style="left:1132px;top:742px;width:84px;height:19px;background:#f1efe6;border-left:1px solid #c8c4b4;border-top:1px solid #c8c4b4"></div><svg class="a" style="left:1134px;top:744px" width="17" height="17" viewBox="0 0 17 17"><path d="M1 6q7-3 14 0v9q-7 3-14 0z" fill="#30b0c8" stroke="#1a7a90"/><path d="M2 9q6-2 12 0M2 12q6-2 12 0" stroke="#a0e8f0"/><path d="M3 7l4 5 9-11" stroke="#20a040" stroke-width="2.6" fill="none"/></svg><svg class="a" style="left:1157px;top:745px" width="15" height="17" viewBox="0 0 15 17"><path d="M1 4l6-3 6 3v9l-6 3-6-3z" fill="#a8a8a8"/><path d="M1 4l6 3 6-3" fill="#d4d4d4" stroke="#888"/><path d="M7 7v9" stroke="#777"/><path d="M7 7L13 4v9l-6 3z" fill="#8a8a8a"/></svg><svg class="a" style="left:1175px;top:743px" width="17" height="18" viewBox="0 0 17 18"><path d="M8 8V4q0-3 4-3t4 3v3" stroke="#b89810" stroke-width="2" fill="none"/><rect x="1" y="8" width="12" height="9" rx="1" fill="#e8c820" stroke="#6a5a08"/><path d="M2 11h10M2 14h10" stroke="#8a7010"/></svg><svg class="a" style="left:1195px;top:744px" width="17" height="17" viewBox="0 0 17 17"><path d="M1 1h9l3 3v12H1z" fill="#40506a"/><path d="M6 2v13M3 6h6" stroke="#fff" stroke-width="1.3"/><circle cx="6" cy="6" r="1.6" fill="#fff"/><circle cx="12" cy="12" r="4.6" fill="#20a040" stroke="#fff"/><path d="M9.5 12l2 2 3-4" stroke="#fff" stroke-width="1.5" fill="none"/></svg><svg class="a" style="left:1221px;top:753px" width="8" height="5"><path d="M0 0H8L4 5Z" fill="#000"/></svg><div class="a" style="left:1237px;top:743px;width:16px;height:16px;border:2px solid #2a3a68;background:linear-gradient(135deg,#e8f0f8,#a8c0e0)"><div class="a" style="left:1px;top:1px;width:10px;height:10px;border:1px solid #fff"></div></div><svg class="a" style="left:1260px;top:748px" width="12" height="12"><path d="M9 2h2v2H9zM6 5h2v2H6zM9 5h2v2H9zM3 8h2v2H3zM6 8h2v2H6zM9 8h2v2H9z" fill="#c8c4b0"/></svg>
<div class="a" style="left:0;top:766px;width:1280px;height:4px;background:#e2e4e0"></div>
<div class="a" style="left:0;top:770px;width:1280px;height:30px;background:linear-gradient(#3d8af4 0px,#2a6ee8 2px,#245edb 5px,#245edb 25px,#1b4fc4 30px)"></div>
<div class="a" style="left:0;top:770px;width:112px;height:30px;border-radius:0 14px 14px 0;background:linear-gradient(#5cbd5c 0px,#3c9c3c 4px,#2f8f2f 20px,#2a7f2a 30px)"></div>
<svg class="a" style="left:9px;top:775px" width="22" height="20" viewBox="0 0 22 20">
<path d="M2 3 Q6 1 10 3 L9 9 Q5 7 1 9Z" fill="#f2612a"/>
<path d="M12 4 Q16 2 20 4 L19 10 Q15 8 11 10Z" fill="#7cc83a"/>
<path d="M1 10 Q5 8 9 10 L8 16 Q4 14 0 16Z" fill="#3d7ef0"/>
<path d="M11 11 Q15 9 19 11 L18 17 Q14 15 10 17Z" fill="#f6c21a"/>
</svg>
<div class="a" style="left:37px;top:771px;font-size:25px;line-height:29px;color:#fff;font-style:italic;font-family:'Liberation Sans', sans-serif;text-shadow:1px 1px 1px #1a4a1a;letter-spacing:1px">开始</div>
<svg class="a" style="left:126px;top:777px" width="16" height="16" viewBox="0 0 16 16"><rect x="1" y="1" width="14" height="10" fill="#2050c0" stroke="#c8d0e0"/><path d="M2 7q6-3 12 0v3H2z" fill="#50b050"/><rect x="5" y="12" width="6" height="3" fill="#e0e0e0"/></svg><svg class="a" style="left:149px;top:777px" width="16" height="16" viewBox="0 0 16 16"><path d="M1 4l13-2v10l-11 3z" fill="#5a8ad8" stroke="#c0d4f4"/><path d="M3 5l10-1-4 5z" fill="#f0f4fa"/></svg><svg class="a" style="left:171px;top:776px" width="17" height="17" viewBox="0 0 17 17"><circle cx="8" cy="9" r="5.5" fill="none" stroke="#48a8f0" stroke-width="3"/><path d="M3 9h10" stroke="#48a8f0" stroke-width="2.4"/><path d="M2 15q-1-6 13-13" stroke="#8ad0f8" stroke-width="1.3" fill="none"/></svg><svg class="a" style="left:194px;top:776px" width="16" height="17" viewBox="0 0 16 17"><rect x="1" y="2" width="13" height="13" rx="3" fill="#f0f4fa" stroke="#1a58c0" stroke-width="1.4"/><path d="M4 6h6v6H4z" fill="#3a7ad8"/><path d="M6 11l7-8" stroke="#f06030" stroke-width="1.6"/></svg><svg class="a" style="left:217px;top:776px" width="16" height="17" viewBox="0 0 16 17"><circle cx="8" cy="8.5" r="7.3" fill="#f4e800" stroke="#111" stroke-width="1.3"/><circle cx="5.5" cy="6.5" r="1.2" fill="#111"/><circle cx="10.5" cy="6.5" r="1.2" fill="#111"/><path d="M3.5 9.5q4.5 5 9 0" stroke="#111" stroke-width="1.3" fill="#e05030"/></svg>
<div class="a" style="left:254px;top:773px;width:156px;height:24px;border-radius:3px;background:linear-gradient(#4a8ef6,#3a7cf0 40%,#3673ea);box-shadow:inset 0 0 0 1px #5a9af8"><svg class="a" style="left:6px;top:4px" width="16" height="16"><rect x="3" y="1" width="11" height="14" fill="#f4f4f4" stroke="#777"/><circle cx="6" cy="9" r="5" fill="#2a7ae0"/><text x="3" y="12" font-size="8" fill="#fff">e</text></svg><div class="a" style="left:25px;top:4px;font-size:14px;line-height:16px;color:#fff;white-space:nowrap"><span style="font-family:'Liberation Sans', sans-serif;font-size:15.5px">综合讨论</span><span class="mono"> - ...</span></div></div>
<div class="a" style="left:414px;top:773px;width:156px;height:24px;border-radius:3px;background:linear-gradient(#4a8ef6,#3a7cf0 40%,#3673ea);box-shadow:inset 0 0 0 1px #5a9af8"><svg class="a" style="left:6px;top:4px" width="17" height="15"><path d="M1 3h6l2 2h7v9H1Z" fill="#f0cc58" stroke="#b08a20"/></svg><div class="a" style="left:25px;top:4px;font-size:14px;line-height:16px;color:#fff;white-space:nowrap"><span class="mono">E:\AUTO CAD</span></div></div>
<div class="a" style="left:574px;top:773px;width:156px;height:24px;border-radius:3px;background:linear-gradient(#4a8ef6,#3a7cf0 40%,#3673ea);box-shadow:inset 0 0 0 1px #5a9af8"><svg class="a" style="left:6px;top:4px" width="16" height="16"><rect x="0" y="0" width="16" height="16" fill="#fff"/><rect x="0" y="0" width="15" height="15" fill="#1f6e9a"/><rect x="3" y="3" width="12" height="4" fill="#e8e4d8"/><rect x="3" y="7" width="12" height="8" fill="#303030"/><path d="M5 15 Q8 8 15 9 L15 15Z" fill="#1b7a30"/></svg><div class="a" style="left:25px;top:4px;font-size:14px;line-height:16px;color:#fff;white-space:nowrap"><span class="mono">AutoCAD Ele...</span></div></div>
<div class="a" style="left:1064px;top:770px;width:216px;height:30px;background:linear-gradient(#27a8f5 0px,#109bea 3px,#0c8fe6 25px,#0a80d6 30px);border-left:1px solid #0a5fb0"></div>
<div class="a mono" style="left:1224px;top:777px;font-size:15px;line-height:16px;color:#fff;white-space:nowrap;letter-spacing:-1.2px">22:08</div>
<svg class="a" style="left:1028px;top:779px" width="16" height="13" viewBox="0 0 16 13"><rect x="0.5" y="2" width="15" height="10" rx="1" fill="#f4f4f4" stroke="#333"/><path d="M3 5h10M3 7.5h10M4 10h8" stroke="#666" stroke-dasharray="1 1"/></svg><svg class="a" style="left:1074px;top:777px" width="16" height="17" viewBox="0 0 16 17"><path d="M2 1l3 3 3-3 3 3 3-3v9l-5 3v3l-3-2-3 2v-3l-1-3z" fill="#f4ecb8" stroke="#b0a060"/><path d="M4 7h2M9 7h2" stroke="#555"/><path d="M3 14l2 2M11 14l2 2" stroke="#222"/></svg><svg class="a" style="left:1092px;top:777px" width="16" height="17" viewBox="0 0 16 17"><circle cx="8" cy="8.5" r="7" fill="#1a70d8" stroke="#c8e0f8" stroke-width="1.4"/><path d="M4 10q2-5 8-5" stroke="#90d0ff" stroke-width="1.6" fill="none"/></svg><svg class="a" style="left:1110px;top:777px" width="17" height="17" viewBox="0 0 17 17"><ellipse cx="7" cy="7" rx="5" ry="6" fill="#111"/><ellipse cx="7" cy="8" rx="3.3" ry="4" fill="#fff"/><path d="M3 10q4 4 8 0v4H3z" fill="#e02020"/><path d="M4 5h6l-3 2z" fill="#f4b820"/><circle cx="12" cy="12" r="4" fill="#f4c040" stroke="#c08010"/><path d="M10 11h4M10 13h4" stroke="#fff"/></svg><svg class="a" style="left:1128px;top:777px" width="16" height="17" viewBox="0 0 16 17"><circle cx="8" cy="9" r="7" fill="#58a8f0" stroke="#2060b8"/><circle cx="8" cy="9" r="5" fill="#a8d8fc"/><path d="M6 2l4-2" stroke="#fff" stroke-width="2"/><circle cx="6" cy="9" r="1" fill="#104080"/><circle cx="10" cy="9" r="1" fill="#104080"/></svg><svg class="a" style="left:1147px;top:777px" width="16" height="17" viewBox="0 0 16 17"><path d="M1 6h4l5-5v15l-5-5H1z" fill="#e85838" stroke="#401010"/><path d="M12 4q3 4 0 9M14 2q4 6 0 13" stroke="#102040" stroke-width="1.4" fill="none"/></svg><svg class="a" style="left:1164px;top:777px" width="17" height="17" viewBox="0 0 17 17"><circle cx="7" cy="7" r="6" fill="#888" stroke="#444"/><circle cx="7" cy="7" r="2.5" fill="#333"/><path d="M9 15l6-5M11 16l5-4" stroke="#a8c8f0"/></svg><svg class="a" style="left:1182px;top:777px" width="17" height="17" viewBox="0 0 17 17"><path d="M1 1q2 10 9 14" stroke="#f0f0f0" stroke-width="2" fill="none"/><path d="M14 1l-6 11 3 2 5-12z" fill="#30c8e0" stroke="#183040"/><path d="M9 13l4 3 2-2z" fill="#e8c020"/></svg><svg class="a" style="left:1200px;top:777px" width="17" height="17" viewBox="0 0 17 17"><path d="M1 8q7-9 15 0z" fill="#30a060" stroke="#186030"/><path d="M8 8v6q0 2-2 2" stroke="#30a060" stroke-width="1.8" fill="none"/></svg>
<svg class="a" style="left:22px;top:70px" width="17" height="17" viewBox="0 0 17 17"><path d="M0.5 1.5h12l3 3v9h-15z" fill="#c9dcf0" stroke="#48648c" stroke-width="1.3"/><path d="M2 3h9v9H2z" fill="#e4eef8"/></svg><svg class="a" style="left:45px;top:70px" width="17" height="17" viewBox="0 0 17 17"><path d="M1 5l9-4 5 1-2 11-9 3z" fill="#e2bf55" stroke="#a88a3c"/><path d="M4 6l6-2v8l-6 2z" fill="#f2f2ea"/><path d="M6 8q1 5 5 5" stroke="#18386a" stroke-width="2" fill="none"/><path d="M9 10.5l5 3.5-5 1.5z" fill="#18386a"/></svg><svg class="a" style="left:69px;top:70px" width="17" height="17" viewBox="0 0 17 17"><rect x="1" y="0.5" width="14" height="14" fill="#4a74b8" stroke="#2a4a84"/><rect x="3.5" y="2" width="9" height="5" fill="#e6edf8"/><rect x="4" y="10" width="8" height="4.5" fill="#d0dcec"/><rect x="6" y="11" width="2" height="3" fill="#2a4a84"/></svg><svg class="a" style="left:98px;top:70px" width="17" height="17" viewBox="0 0 17 17"><path d="M5 1l5-1 3 5-6 1z" fill="#f2f2f4" stroke="#8090b0"/><path d="M1 7l9-2 5 3v4l-9 2-5-3z" fill="#b0b8d4" stroke="#4c5680"/><path d="M6 11l7-1 1 4-7 2z" fill="#eef0f6" stroke="#6070a0"/></svg><svg class="a" style="left:120px;top:70px" width="17" height="17" viewBox="0 0 17 17"><path d="M1 1h10l3 3v10H1z" fill="#d2e2f2" stroke="#5878a4" stroke-width="1.2"/><circle cx="9" cy="8" r="3.6" fill="#e8f0fa" stroke="#46648e" stroke-width="1.5"/><path d="M6.4 10.6l-4.5 5" stroke="#7a4a28" stroke-width="2"/></svg><svg class="a" style="left:143px;top:70px" width="17" height="17" viewBox="0 0 17 17"><path d="M1 9l8-2 6 3v3l-8 2-6-3z" fill="#c8ccdc" stroke="#4c5680"/><path d="M3 2l6-1 2 6-6 1z" fill="#f0cc40" stroke="#a08020"/><circle cx="12" cy="5" r="4" fill="#3a88c8" stroke="#1e5890"/><path d="M9 4q3-2 6 1" stroke="#8ad0f0" fill="none"/></svg><svg class="a" style="left:166px;top:70px" width="17" height="17" viewBox="0 0 17 17"><path d="M1 8l7 4 0 4-7-3z" fill="#d4d8e4"/><path d="M8 12l7-4v4l-7 4z" fill="#b8bed0"/><circle cx="10" cy="7" r="6" fill="#3c7cc0" stroke="#1c4c88"/><path d="M5 5q5-3 10 2M6 10q4 2 9-1" stroke="#e88a30" stroke-width="1.6" fill="none"/><path d="M8 2q4 1 6 4" stroke="#6ac0e8" stroke-width="1.5" fill="none"/></svg><svg class="a" style="left:195px;top:70px" width="17" height="17" viewBox="0 0 17 17"><circle cx="13" cy="4.5" r="2.6" fill="none" stroke="#222" stroke-width="1.4"/><circle cx="13" cy="11.5" r="2.6" fill="none" stroke="#222" stroke-width="1.4"/><path d="M0 5L11 10M0 11L11 6" stroke="#6a6a78" stroke-width="1.6"/></svg><svg class="a" style="left:218px;top:70px" width="17" height="17" viewBox="0 0 17 17"><path d="M0.5 0.5h10l2 2v8h-12z" fill="#c6d8ee" stroke="#4a6690" stroke-width="1.2"/><path d="M3.5 4.5h10l2 2v9h-12z" fill="#d8e6f6" stroke="#4a6690" stroke-width="1.2"/></svg><svg class="a" style="left:240px;top:70px" width="17" height="17" viewBox="0 0 17 17"><path d="M1 5l6-4 9 9-6 6z" fill="#e2c052" stroke="#9a8040"/><path d="M5 4h7l2 2v7H5z" fill="#dce8f4" stroke="#5a7090"/><rect x="6" y="1" width="4" height="3" fill="#fff" stroke="#777"/></svg><svg class="a" style="left:264px;top:70px" width="17" height="17" viewBox="0 0 17 17"><path d="M14 1l2 2-8 8-2-2z" fill="#8c6030" stroke="#4a3010"/><path d="M6 9l2 2-3 4-5 1 2-4z" fill="#141414"/></svg><svg class="a" style="left:287px;top:70px" width="17" height="17" viewBox="0 0 17 17"><path d="M2 8h8v7H2z" fill="#f08c70" stroke="#3a5a98" stroke-width="1.2"/><path d="M0 13h3v3H0z" fill="#28508c"/><path d="M10 0l6 0-4 5h3l-7 7 2-5h-3z" fill="#f4d020" stroke="#b08000" stroke-width="0.7"/></svg><svg class="a" style="left:317px;top:70px" width="17" height="17" viewBox="0 0 17 17"><path d="M15 4q-2-4-6-3q-4 1-5 6l-3-2 1 9 6-4-3-1q1-4 4-4q3 0 4 3z" fill="#1a3c78" stroke="#0c2450" stroke-width="0.6"/></svg><svg class="a" style="left:353px;top:70px" width="17" height="17" viewBox="0 0 17 17"><path d="M1 4q2-4 6-3q4 1 5 6l3-2-1 9-6-4 3-1q-1-4-4-4q-3 0-4 3z" fill="#c4c4c4" stroke="#b0b0b0" stroke-width="0.6"/></svg><svg class="a" style="left:394px;top:70px" width="17" height="17" viewBox="0 0 17 17"><path d="M1 6q1-2 3 0l2 2 0-5q1-2 3 0l0 4q2-1 3 1l1 4-2 4H7z" fill="#e8a0a0" stroke="#a05050" stroke-width="0.8"/><path d="M9 11h5l2 5H8z" fill="#2a4c90"/><path d="M13 0v9M8.5 4.5h9" stroke="#1c3a80" stroke-width="1.4"/><path d="M11 2l2-2 2 2M11 7l2 2 2-2" fill="none" stroke="#1c3a80"/></svg><svg class="a" style="left:417px;top:70px" width="17" height="17" viewBox="0 0 17 17"><circle cx="6" cy="7" r="5" fill="#dde6f2" stroke="#4a5a70" stroke-width="1.6"/><path d="M9.5 10.5l4 4.5" stroke="#7a4a28" stroke-width="2.2"/><path d="M12 1v5M9.5 3.5h5M9.5 7.5h6" stroke="#1a2a48" stroke-width="1.3"/></svg><svg class="a" style="left:440px;top:70px" width="17" height="17" viewBox="0 0 17 17"><circle cx="6" cy="7" r="5.3" fill="#c8d4e4" stroke="#3a4a66" stroke-width="1.6"/><rect x="3.5" y="4.5" width="5" height="5" fill="#5a7aa8" stroke="#1a2a58"/><path d="M9.5 10.5l4 4" stroke="#7a4a28" stroke-width="2.2"/><path d="M17 12.5V17H12.5Z" fill="#000"/></svg><svg class="a" style="left:462px;top:70px" width="17" height="17" viewBox="0 0 17 17"><circle cx="6" cy="7" r="5.3" fill="#d0dae8" stroke="#3a4a66" stroke-width="1.6"/><path d="M9.5 10.5l4 4.5" stroke="#7a4a28" stroke-width="2.2"/><path d="M4 8q0-6 8-5" stroke="#1a3a70" stroke-width="2" fill="none"/><path d="M3 5l1 5 4-3z" fill="#1a3a70"/></svg><svg class="a" style="left:492px;top:70px" width="17" height="17" viewBox="0 0 17 17"><path d="M1 1h3v3H1z" fill="#f020f0"/><path d="M4 1h3v3H4z" fill="#f02020"/><path d="M7 1h3v3H7z" fill="#20e020"/><path d="M10 1h3v3h-3z" fill="#20a0f0"/><path d="M13 1h3v3h-3z" fill="#f0c020"/><path d="M3 7l8-2 3 3-7 3z" fill="#e8a890"/><path d="M3 10q-2 3 1 5M11 9l-2 7M11 9l3 7M10 13h3" stroke="#405070" stroke-width="1.3" fill="none"/></svg><svg class="a" style="left:515px;top:70px" width="17" height="17" viewBox="0 0 17 17"><rect x="1" y="1" width="15" height="15" fill="#e4ecf6" stroke="#28508c" stroke-width="1.3"/><rect x="2" y="2" width="3" height="13" fill="#c4d4ec"/><path d="M7 4h2v2H7zM11 4h2v2h-2zM7 8h2v2H7zM11 8h2v2h-2zM7 12h2v2H7zM11 12h2v2h-2z" fill="#28385a"/></svg><svg class="a" style="left:538px;top:70px" width="17" height="17" viewBox="0 0 17 17"><rect x="1" y="1" width="9" height="15" fill="#d6e2f2" stroke="#28508c" stroke-width="1.3"/><path d="M3 4h2v2H3zM3 8h2v2H3zM3 12h2v2H3z" fill="#28385a"/><path d="M7 2q7 0 7 8" stroke="#28508c" stroke-width="1.5" fill="none"/><path d="M11 9h6l-3 3z" fill="#1a3a70"/><rect x="11" y="12" width="4" height="4" fill="#e8e0b0" stroke="#333"/></svg><svg class="a" style="left:560px;top:70px" width="17" height="17" viewBox="0 0 17 17"><rect x="1" y="2" width="16" height="13" fill="#9cb4cc"/><path d="M1 6q8-4 16 2v4q-8-6-16-2z" fill="#e0e8f0"/><circle cx="13" cy="9" r="2.5" fill="#7890a8" stroke="#f0f4f8"/><path d="M1 13h16" stroke="#6a8aa8"/></svg><svg class="a" style="left:584px;top:70px" width="17" height="17" viewBox="0 0 17 17"><rect x="4" y="6" width="13" height="10" fill="#c8c8c8" stroke="#888"/><path d="M2 3q2-3 5-1q3-2 5 1q3 1 1 4q2 3-1 4q-2 3-5 1q-3 2-5-1q-3-1-1-4q-2-3 1-4z" fill="#f4d8d8" stroke="#e02020" stroke-width="1.6"/></svg><svg class="a" style="left:607px;top:70px" width="17" height="17" viewBox="0 0 17 17"><rect x="2" y="0.5" width="12" height="16" fill="#101010" rx="1"/><rect x="3.5" y="2" width="9" height="3" fill="#9cc89c"/><path d="M4 7h2v2H4zM7.5 7h2v2h-2zM11 7h1.5v2H11zM4 10h2v2H4zM7.5 10h2v2h-2zM11 10h1.5v2H11zM4 13h2v2H4zM7.5 13h2v2h-2zM11 13h1.5v2H11z" fill="#fff"/></svg><svg class="a" style="left:637px;top:70px" width="17" height="17" viewBox="0 0 17 17"><rect x="0.5" y="0.5" width="16" height="16" rx="3" fill="#2a58a8" stroke="#1a3a78"/><path d="M5.5 6q0-3.5 3-3.5t3 3q0 2-2.5 3v1.5" stroke="#fff" stroke-width="2.4" fill="none"/><rect x="7.5" y="12" width="2.4" height="2.4" fill="#fff"/></svg><svg class="a" style="left:852px;top:70px" width="17" height="17" viewBox="0 0 17 17"><rect x="0.5" y="0.5" width="16" height="16" fill="#6a86a8"/><circle cx="8.5" cy="8.5" r="6" fill="#2c2c2c"/><path d="M8.5 0v17M0 8.5h17M2.5 2.5l12 12M14.5 2.5l-12 12" stroke="#2c2c2c" stroke-width="2.6"/><circle cx="8.5" cy="8.5" r="3.3" fill="#5a90d0" stroke="#a8c8e8"/></svg><svg class="a" style="left:875px;top:70px" width="17" height="17" viewBox="0 0 17 17"><path d="M1 1h15v15H1z" fill="none" stroke="#777" stroke-dasharray="2 1"/><path d="M2 8l7-6 7 6v8H2z" fill="#141414"/><path d="M11 2v3" stroke="#333"/></svg><svg class="a" style="left:340px;top:70px" width="8" height="17" viewBox="0 0 8 17"><path d="M1 7h6l-3 3z" fill="#1a3c78"/></svg><svg class="a" style="left:375px;top:70px" width="8" height="17" viewBox="0 0 8 17"><path d="M1 7h6l-3 3z" fill="#c4c2b8"/></svg><div class="a" style="left:90px;top:67px;width:2px;height:20px;border-left:1px solid #c5c2b0;border-right:1px solid #fff"></div><div class="a" style="left:188px;top:67px;width:2px;height:20px;border-left:1px solid #c5c2b0;border-right:1px solid #fff"></div><div class="a" style="left:309px;top:67px;width:2px;height:20px;border-left:1px solid #c5c2b0;border-right:1px solid #fff"></div><div class="a" style="left:387px;top:67px;width:2px;height:20px;border-left:1px solid #c5c2b0;border-right:1px solid #fff"></div><div class="a" style="left:485px;top:67px;width:2px;height:20px;border-left:1px solid #c5c2b0;border-right:1px solid #fff"></div><div class="a" style="left:629px;top:67px;width:2px;height:20px;border-left:1px solid #c5c2b0;border-right:1px solid #fff"></div><svg class="a" style="left:22px;top:99px" width="17" height="17" viewBox="0 0 17 17"><path d="M1 5l7-4 8 4-8 4z" fill="#c8d4e4" stroke="#7088a8"/><path d="M1 8l7 4 8-4" stroke="#7088a8" fill="none" stroke-width="1.2"/><path d="M1 11l7 4 8-4" stroke="#7088a8" fill="none" stroke-width="1.2"/></svg><svg class="a" style="left:48px;top:99px" width="11" height="15" viewBox="0 0 11 15"><path d="M3 9q-3-3-1-6q3-3 6 0q2 3-1 6z" fill="#fff7c8" stroke="#7a7030" stroke-width="1.1"/><rect x="3.5" y="9.5" width="3" height="4" fill="#8a90b8"/></svg><svg class="a" style="left:63px;top:99px" width="14" height="15" viewBox="0 0 14 15"><circle cx="6.5" cy="7" r="5.6" fill="#f0e050" stroke="#5a7a3a" stroke-width="1.3"/><path d="M0 0.5l1.5 1.5M13 0.5l-1.5 1.5M0 13.5l1.5-1.5M13 13.5l-1.5-1.5" stroke="#c8b020" stroke-width="1.3"/></svg><svg class="a" style="left:78px;top:98px" width="15" height="16" viewBox="0 0 15 16"><circle cx="5.5" cy="5.5" r="5" fill="#a4bcd8" stroke="#7a98bc"/><circle cx="5.5" cy="5.5" r="2" fill="#e0ecf8"/><rect x="6.5" y="7.5" width="7.5" height="7" fill="#fff" stroke="#5a6a80"/></svg><svg class="a" style="left:96px;top:97px" width="15" height="16" viewBox="0 0 15 16"><path d="M2 8V4q0-3.5 3.5-3.5t3.5 3.5v2" stroke="#b8a820" stroke-width="1.8" fill="none"/><rect x="5" y="6.5" width="8" height="8.5" rx="2" fill="#e8d840" stroke="#8a7a10"/><path d="M6 9.5h6M6 12.5h6" stroke="#a89810"/></svg><svg class="a" style="left:112px;top:97px" width="12" height="16" viewBox="0 0 12 16"><rect x="1.5" y="4.5" width="9" height="10" fill="#fff" stroke="#000" stroke-width="1.3"/></svg><div class="a" style="left:128px;top:97px;font-size:14px;line-height:17px;color:#111;font-family:'Liberation Sans',sans-serif">图层1</div><svg class="a" style="left:345px;top:98px" width="17" height="17" viewBox="0 0 17 17"><path d="M4 5l6-3 7 3-7 3z" fill="#c8d4e4" stroke="#6a80a0"/><path d="M4 8l6 3 7-3" stroke="#6a80a0" fill="none"/><path d="M4 10l6 3 7-3v2l-7 3-6-3z" fill="#f0e040" stroke="#a89010"/><path d="M1 16l4-4M2 12h3v3" stroke="#1a2a50" stroke-width="1.4" fill="none"/></svg><svg class="a" style="left:368px;top:98px" width="17" height="17" viewBox="0 0 17 17"><path d="M1 6l7-3 8 3-8 3z" fill="#c8d4e4" stroke="#6a80a0"/><path d="M1 9l7 3 8-3M1 12l7 3 8-3" stroke="#6a80a0" fill="none"/><path d="M6 7q0-6 6-5q3 1 2 4" stroke="#1a3a70" stroke-width="1.8" fill="none"/><path d="M3 5l3 4 3-3z" fill="#1a3a70"/></svg><svg class="a" style="left:391px;top:98px" width="17" height="17" viewBox="0 0 17 17"><path d="M1 5l7-4 8 4-8 4z" fill="#c8d4e4" stroke="#6a80a0"/><path d="M1 8l7 4M1 11l7 4" stroke="#6a80a0" fill="none"/><rect x="7" y="7" width="10" height="9" fill="#e8f0f8" stroke="#28508c" stroke-width="1.2"/><rect x="7" y="7" width="10" height="2.5" fill="#3a6ab8"/><path d="M9 12h6M9 14h6" stroke="#28508c"/></svg><svg class="a" style="left:22px;top:125px" width="17" height="17" viewBox="0 0 17 17"><path d="M3 8q0-6 7-5q4 1 4 5z" fill="#c03a30"/><path d="M10 2q6 0 5 7" stroke="#111" stroke-width="2" fill="none"/><path d="M12 8h5l-3 3z" fill="#111"/><path d="M1 10h13M7 8v2" stroke="#111" stroke-width="2"/><circle cx="3" cy="14" r="1.6" fill="#3050a0"/><circle cx="10" cy="14" r="1.6" fill="#3050a0"/><path d="M17 12.5V17H12.5Z" fill="#000"/></svg><svg class="a" style="left:45px;top:125px" width="17" height="17" viewBox="0 0 17 17"><path d="M2 4q0-3 5-3q4 0 4 3z" fill="#c03a30"/><path d="M1 5h9" stroke="#111" stroke-width="1.6"/><circle cx="2.5" cy="7.5" r="1.2" fill="#566"/><circle cx="8" cy="7.5" r="1.2" fill="#566"/><path d="M9 2q6 0 5 7" stroke="#111" stroke-width="1.6" fill="none"/><path d="M11 8h5l-2.5 3z" fill="#111"/><path d="M6 11q0-2 4-2q4 0 4 2z" fill="#c03a30"/><path d="M5 12h11" stroke="#111" stroke-width="1.6"/><circle cx="7" cy="15" r="1.2" fill="#566"/><circle cx="13" cy="15" r="1.2" fill="#566"/></svg><svg class="a" style="left:68px;top:125px" width="17" height="17" viewBox="0 0 17 17"><path d="M1 4h5M10 4h6" stroke="#2a4a84" stroke-width="1.6"/><path d="M6 1v6M10 1v6" stroke="#2a4a84" stroke-width="1.4"/><path d="M8 0v17" stroke="#d0a0a0" stroke-dasharray="1.5 1"/><path d="M1 12h5M11 12h4" stroke="#2a4a84" stroke-width="1.6"/><path d="M5 10l2 2-2 2z" fill="#2a4a84"/><path d="M11 10l-2 2 2 2z" fill="#2a4a84"/><path d="M17 12.5V17H12.5Z" fill="#000"/></svg><svg class="a" style="left:91px;top:125px" width="17" height="17" viewBox="0 0 17 17"><path d="M1 5h7M10 2h6M4 8h8M1 12h4M7 12h6M1 15h6" stroke="#5a6480" stroke-width="1.6"/><path d="M13 5h2M7 9h2" stroke="#5a6480" stroke-width="1.6"/><path d="M17 12.5V17H12.5Z" fill="#000"/></svg><svg class="a" style="left:114px;top:125px" width="17" height="17" viewBox="0 0 17 17"><rect x="1" y="1" width="15" height="15" fill="#dce6f2" stroke="#28508c" stroke-width="1.4"/><rect x="6" y="2" width="5" height="13" fill="#c8c080"/><path d="M3 4v1M3 8v1M3 12v1M13 4v1M13 8v1M13 12v1" stroke="#28508c" stroke-width="1.6"/><path d="M7.5 4h2M7.5 7h2M7.5 10h2M7.5 13h2" stroke="#404020" stroke-width="1.2"/><path d="M17 12.5V17H12.5Z" fill="#000"/></svg><svg class="a" style="left:138px;top:125px" width="17" height="17" viewBox="0 0 17 17"><path d="M1 1h8q3 0 3 3v12H1z" fill="#dce6f2" stroke="#28508c" stroke-width="1.4"/><rect x="2" y="2" width="3" height="13" fill="#c0d0e8"/><path d="M9 4v1M9 8v1M9 12v1" stroke="#28508c" stroke-width="1.6"/><path d="M17 12.5V17H12.5Z" fill="#000"/></svg><svg class="a" style="left:160px;top:125px" width="17" height="17" viewBox="0 0 17 17"><path d="M2 0v17" stroke="#28508c" stroke-width="1.3"/><path d="M2 12l3-6 3 8 2-5 2 3" stroke="#28508c" stroke-width="1.4" fill="none"/><rect x="8" y="1" width="7" height="4" fill="#f0f080" stroke="#a0a040"/><rect x="10" y="6" width="6" height="4" fill="#f0f080" stroke="#a0a040"/><path d="M17 12.5V17H12.5Z" fill="#000"/></svg><svg class="a" style="left:188px;top:125px" width="17" height="17" viewBox="0 0 17 17"><path d="M2 5q0-4 6-4q6 0 6 4z" fill="#c03a30"/><path d="M1 6h13M1 13h13" stroke="#111" stroke-width="1.6"/><path d="M5 14l10-12 2 2-10 11-3 1z" fill="#f0c020" stroke="#806010"/><circle cx="2" cy="15" r="1.4" fill="none" stroke="#333"/><path d="M17 12.5V17H12.5Z" fill="#000"/></svg><svg class="a" style="left:212px;top:125px" width="17" height="17" viewBox="0 0 17 17"><path d="M1 3h14" stroke="#1a3a80" stroke-width="1.4"/><path d="M4 1v4M8 1v4" stroke="#1a3a80"/><rect x="12" y="0" width="4" height="6" fill="#fff" stroke="#e02020" stroke-width="1.3"/><path d="M4 9q0-2 4-2q4 0 4 2z" fill="#c03a30"/><path d="M2 10h13M8 9v3" stroke="#111" stroke-width="1.6"/><path d="M2 13h13" stroke="#111" stroke-width="1.6"/><circle cx="3" cy="15" r="1.3" fill="none" stroke="#333"/><path d="M17 12.5V17H12.5Z" fill="#000"/></svg><svg class="a" style="left:235px;top:125px" width="17" height="17" viewBox="0 0 17 17"><path d="M8 1v15M1 8h15" stroke="#3a5a98" stroke-width="1.4" stroke-dasharray="2 1"/><path d="M6 3l2-2 2 2M6 13l2 2 2-2M3 6l-2 2 2 2M13 6l2 2-2 2" fill="none" stroke="#1a3a80" stroke-width="1.4"/><rect x="6" y="6" width="4" height="4" fill="#fff" stroke="#1a3a80"/><path d="M17 12.5V17H12.5Z" fill="#000"/></svg><svg class="a" style="left:258px;top:125px" width="17" height="17" viewBox="0 0 17 17"><path d="M1 6l10 3v7H1z" fill="#2a3a70"/><path d="M3 12l9-3 4 4v3H3z" fill="#e02020"/><path d="M5 12l10-11 2 2-10 11-3 0z" fill="#f0d020" stroke="#806010"/><path d="M17 12.5V17H12.5Z" fill="#000"/></svg><svg class="a" style="left:281px;top:125px" width="17" height="17" viewBox="0 0 17 17"><path d="M1 4h5M1 6h5M11 11h5M11 13h5" stroke="#1a3a80" stroke-width="1.2"/><path d="M3 1v8M5 1v8M12 8v8M14 8v8" stroke="#1a3a80" stroke-width="1.4"/><path d="M10 3h4v5l-2 0" stroke="#1a3a80" stroke-width="1.5" fill="none"/><path d="M8 11h-4v3" stroke="#1a3a80" stroke-width="1.5" fill="none"/></svg><svg class="a" style="left:304px;top:125px" width="17" height="17" viewBox="0 0 17 17"><path d="M3 9q0-3 5-3q5 0 5 3z" fill="#b03030"/><path d="M2 10h12" stroke="#333" stroke-width="1.6"/><circle cx="4" cy="13" r="1.8" fill="none" stroke="#222" stroke-width="1.3"/><circle cx="11" cy="13" r="1.8" fill="none" stroke="#222" stroke-width="1.3"/><path d="M4 7l9-6 3 3-9 6z" fill="#f0a0b0" stroke="#d03030" stroke-width="1.2"/></svg><svg class="a" style="left:333px;top:125px" width="17" height="17" viewBox="0 0 17 17"><ellipse cx="8.5" cy="8.5" rx="7.5" ry="7" fill="#c82020"/><ellipse cx="8.5" cy="6" rx="6" ry="3.5" fill="#5aa0e8"/><ellipse cx="8.5" cy="8" rx="7.5" ry="2" fill="#b8d4f0" opacity=".7"/><path d="M17 12.5V17H12.5Z" fill="#000"/></svg><svg class="a" style="left:356px;top:125px" width="17" height="17" viewBox="0 0 17 17"><path d="M0 9h16" stroke="#2a3a60" stroke-width="1.6"/><path d="M5 12l7-7" stroke="#e03030" stroke-width="1.4"/><path d="M17 12.5V17H12.5Z" fill="#000"/></svg><svg class="a" style="left:379px;top:125px" width="17" height="17" viewBox="0 0 17 17"><path d="M1 3h15" stroke="#2a3a60" stroke-width="1.8"/><path d="M8 3v13" stroke="#2a3a60" stroke-width="1.6"/><circle cx="8" cy="3" r="1.8" fill="#e03030"/><path d="M17 12.5V17H12.5Z" fill="#000"/></svg><svg class="a" style="left:402px;top:125px" width="17" height="17" viewBox="0 0 17 17"><path d="M3 0v17M14 0v17" stroke="#2a3a60" stroke-width="1.6"/><path d="M3 2h11M3 6h11M3 10h11M3 14h11" stroke="#5a6a88" stroke-width="1.8"/><path d="M17 12.5V17H12.5Z" fill="#000"/></svg><svg class="a" style="left:426px;top:125px" width="17" height="17" viewBox="0 0 17 17"><path d="M2 0v17M15 0v17" stroke="#2a3a60" stroke-width="1.6"/><path d="M2 12h13" stroke="#e03030" stroke-width="1.6"/><path d="M2 15h13" stroke="#2a3a60" stroke-width="1.6"/><path d="M7 1v5h-3l5 5 5-5h-3V1z" fill="#111"/></svg><svg class="a" style="left:448px;top:125px" width="17" height="17" viewBox="0 0 17 17"><path d="M5 1h4l1 6h-6z" fill="#303030"/><path d="M4 7h3v9H4zM8 7h3v9H8z" fill="#e03030"/></svg><svg class="a" style="left:489px;top:125px" width="17" height="17" viewBox="0 0 17 17"><path d="M1 4l4 2.5-4 2.5z" fill="#e02020"/><path d="M6 7h10M1 12h15" stroke="#3a4a70" stroke-width="1.5"/><path d="M8.5 2v6.0M11.0 2v6.0M7 4.0h6.0M7 6.0h6.0" stroke="#2a4a84" stroke-width="1.2"/><path d="M14 4l-2 2 2 2" stroke="#2a3a60" fill="none"/><path d="M17 12.5V17H12.5Z" fill="#000"/></svg><svg class="a" style="left:512px;top:125px" width="17" height="17" viewBox="0 0 17 17"><path d="M1 13h15" stroke="#3a4a70" stroke-width="1.5"/><path d="M3 13l8-7" stroke="#e02020" stroke-width="1.5"/><circle cx="3" cy="13" r="1.7" fill="#1a2a50"/><path d="M11.5 0v6.0M14.0 0v6.0M10 2.0h6.0M10 4.0h6.0" stroke="#2a4a84" stroke-width="1.2"/><path d="M17 12.5V17H12.5Z" fill="#000"/></svg><svg class="a" style="left:535px;top:125px" width="17" height="17" viewBox="0 0 17 17"><path d="M1 13h15" stroke="#3a4a70" stroke-width="1.5"/><path d="M2.5 4v6.0M5.0 4v6.0M1 6.0h6.0M1 8.0h6.0" stroke="#2a4a84" stroke-width="1.2"/><path d="M11.5 4v6.0M14.0 4v6.0M10 6.0h6.0M10 8.0h6.0" stroke="#2a9a4a" stroke-width="1.2"/><path d="M17 12.5V17H12.5Z" fill="#000"/></svg><svg class="a" style="left:558px;top:125px" width="17" height="17" viewBox="0 0 17 17"><path d="M1 14h16" stroke="#3a4a70" stroke-width="1.5"/><path d="M11 1v11M6 6h10" stroke="#1a3a80" stroke-width="1.4"/><path d="M9 3l2-2 2 2M9 9l2 2 2-2M8 4l-2 2 2 2M14 4l2 2-2 2" fill="none" stroke="#1a3a80"/><path d="M2.5 6v6.0M5.0 6v6.0M1 8.0h6.0M1 10.0h6.0" stroke="#2a4a84" stroke-width="1.2"/><path d="M17 12.5V17H12.5Z" fill="#000"/></svg><svg class="a" style="left:581px;top:125px" width="17" height="17" viewBox="0 0 17 17"><path d="M1 14h15" stroke="#3a4a70" stroke-width="1.5"/><path d="M2.5 7v6.0M5.0 7v6.0M1 9.0h6.0M1 11.0h6.0" stroke="#2a4a84" stroke-width="1.2"/><path d="M6 12l9-10 2 2-9 10-3 1z" fill="#f0d020" stroke="#806010"/><path d="M17 12.5V17H12.5Z" fill="#000"/></svg><svg class="a" style="left:604px;top:125px" width="17" height="17" viewBox="0 0 17 17"><path d="M1 9h11" stroke="#3a4a70" stroke-width="1.5"/><path d="M7.5 1v6.0M10.0 1v6.0M6 3.0h6.0M6 5.0h6.0" stroke="#2a4a84" stroke-width="1.2"/><path d="M10 9q6 0 5 4q-1 3-6 3" stroke="#111" stroke-width="1.6" fill="none"/><path d="M10 13l-3 3 3 2z" fill="#111"/></svg><svg class="a" style="left:627px;top:125px" width="17" height="17" viewBox="0 0 17 17"><path d="M2.5 1v6.0M5.0 1v6.0M1 3.0h6.0M1 5.0h6.0" stroke="#2a4a84" stroke-width="1.2"/><path d="M2.5 10v6.0M5.0 10v6.0M1 12.0h6.0M1 14.0h6.0" stroke="#2a4a84" stroke-width="1.2"/><path d="M1 9h15" stroke="#8a7a6a" stroke-width="1.4"/><path d="M10 3q6 0 5 5q-1 5-6 4" stroke="#111" stroke-width="1.7" fill="none"/><path d="M10 1l-3 2 3 2z" fill="#111"/></svg><svg class="a" style="left:650px;top:125px" width="17" height="17" viewBox="0 0 17 17"><path d="M1 4h9M1 12h5l3-3" stroke="#2a4a84" stroke-width="1.5" fill="none"/><path d="M8 2l3 2-3 2z" fill="#2a4a84"/><path d="M12.5 1v6.0M15.0 1v6.0M11 3.0h6.0M11 5.0h6.0" stroke="#2a9a4a" stroke-width="1.2"/><path d="M2.5 7v6.0M5.0 7v6.0M1 9.0h6.0M1 11.0h6.0" stroke="#2a4a84" stroke-width="1.2"/><path d="M17 12.5V17H12.5Z" fill="#000"/></svg><svg class="a" style="left:673px;top:125px" width="17" height="17" viewBox="0 0 17 17"><path d="M1 15h15" stroke="#2a4a84" stroke-width="1.6"/><path d="M2.5 7v6.0M5.0 7v6.0M1 9.0h6.0M1 11.0h6.0" stroke="#2a4a84" stroke-width="1.2"/><path d="M5 12l9-10 3 3-9 9-3 1z" fill="#f0a0b0" stroke="#d03030" stroke-width="1.3"/></svg><svg class="a" style="left:701px;top:125px" width="17" height="17" viewBox="0 0 17 17"><path d="M1 2h4M1 5h6M1 8h6M1 11h6M1 14h6" stroke="#2a4a84" stroke-width="1.5"/><path d="M9 2h7M9 5h7M9 8h7M9 11h7M9 14h7" stroke="#7aa0c8" stroke-width="1.5"/><path d="M6 8l4-3v6z" fill="#f0d040"/><path d="M9 12l3 3h-3z" fill="#e02020"/><path d="M17 12.5V17H12.5Z" fill="#000"/></svg><svg class="a" style="left:724px;top:125px" width="17" height="17" viewBox="0 0 17 17"><path d="M2 2l12 13M14 2L2 15" stroke="#2a4a84" stroke-width="1.8"/><circle cx="3" cy="2" r="2" fill="none" stroke="#2a4a84"/><circle cx="14" cy="2" r="2" fill="none" stroke="#2a4a84"/><path d="M17 12.5V17H12.5Z" fill="#000"/></svg><svg class="a" style="left:748px;top:125px" width="17" height="17" viewBox="0 0 17 17"><path d="M9 8l4-6 4 6z" fill="#2a60c0"/><path d="M3 9q0-3 5-3q4 0 4 3z" fill="#c03030"/><path d="M1 10h13M1 13h13" stroke="#111" stroke-width="1.6"/><circle cx="3" cy="15" r="1.2" fill="none" stroke="#333"/><circle cx="8" cy="15" r="1.2" fill="none" stroke="#333"/><path d="M17 12.5V17H12.5Z" fill="#000"/></svg><svg class="a" style="left:771px;top:125px" width="17" height="17" viewBox="0 0 17 17"><path d="M1 13q6-6 15-4v4q-8-1-15 4z" fill="#f0c020"/><path d="M4 11q2-4 6-4" stroke="#2a9a5a" stroke-width="1.5" fill="none"/><circle cx="11" cy="2" r="1.5" fill="#111"/><path d="M11 4l-2 4 2 3M9 6l-3 1M11 6l3-1" stroke="#111" stroke-width="1.2" fill="none"/><path d="M17 12.5V17H12.5Z" fill="#000"/></svg><svg class="a" style="left:797px;top:125px" width="10" height="17" viewBox="0 0 10 17"><path d="M8 3v11L1 8.5z" fill="#b02818"/></svg><svg class="a" style="left:822px;top:125px" width="10" height="17" viewBox="0 0 10 17"><path d="M1 3v11l7-5.5z" fill="#b02818"/></svg><svg class="a" style="left:839px;top:125px" width="17" height="17" viewBox="0 0 17 17"><rect x="1" y="1" width="15" height="15" fill="#e8eef6" stroke="#2a3a60" stroke-width="1.3"/><path d="M1 4h15" stroke="#2a3a60" stroke-width="2"/><path d="M2 7h13M2 10h13M2 13h13" stroke="#a8b8d8" stroke-width="1.5"/><path d="M5 4v12M9 4v12M13 4v12" stroke="#a8b8d8"/><path d="M17 12.5V17H12.5Z" fill="#000"/></svg><svg class="a" style="left:862px;top:125px" width="17" height="17" viewBox="0 0 17 17"><path d="M6 0v16M11 0v16M1 5h15M1 11h15" stroke="#2a4a84" stroke-width="1.5"/><rect x="0" y="1" width="4" height="3" fill="#e02020"/><rect x="12" y="1" width="4" height="3" fill="#20a040"/><rect x="0" y="12" width="4" height="4" fill="#f0d020"/><path d="M17 12.5V17H12.5Z" fill="#000"/></svg><svg class="a" style="left:886px;top:125px" width="17" height="17" viewBox="0 0 17 17"><path d="M1 3h6l2 2h7v11H1z" fill="#e6c878" stroke="#a89050"/><path d="M2 11h3v-3h4v4h3v-3h3" stroke="#222" stroke-width="1.3" fill="none"/><path d="M17 12.5V17H12.5Z" fill="#000"/></svg><svg class="a" style="left:926px;top:125px" width="17" height="17" viewBox="0 0 17 17"><path d="M1 1h15v8q0 6-7.5 7.5Q1 15 1 9z" fill="#20904a"/><circle cx="8.5" cy="8" r="5" fill="#e8f0f0" stroke="#3a5a90" stroke-width="1.4"/><circle cx="8.5" cy="8" r="2.6" fill="#fff" stroke="#3a5a90" stroke-width="1.2"/><path d="M17 12.5V17H12.5Z" fill="#000"/></svg><svg class="a" style="left:950px;top:125px" width="17" height="17" viewBox="0 0 17 17"><path d="M1 3h15M1 8h15M1 13h15M4 1v15M8 1v15M12 1v15" stroke="#6a4a3a" stroke-width="1.3"/><path d="M4 14l10-12 2 2-10 11-3 1z" fill="#f0c020" stroke="#806010"/><path d="M17 12.5V17H12.5Z" fill="#000"/></svg><svg class="a" style="left:973px;top:125px" width="17" height="17" viewBox="0 0 17 17"><path d="M1 2h8v6H1z" fill="#20904a"/><circle cx="5" cy="5" r="2" fill="#e8f0f0"/><path d="M8 4q6 0 5 6" stroke="#111" stroke-width="1.8" fill="none"/><path d="M10 9h6l-3 3z" fill="#111"/><path d="M7 10h9v7H7z" fill="#20904a"/><circle cx="11.5" cy="13" r="2.3" fill="#e8f0f0"/></svg><svg class="a" style="left:996px;top:125px" width="17" height="17" viewBox="0 0 17 17"><path d="M1 1h15v8q0 6-7.5 7.5Q1 15 1 9z" fill="#20904a"/><circle cx="8.5" cy="8" r="4.5" fill="#c8d8e8" stroke="#3a5a90"/><path d="M3 14l11-12 2 2-11 11-3 1z" fill="#f0d020" stroke="#806010"/><path d="M17 12.5V17H12.5Z" fill="#000"/></svg><svg class="a" style="left:1019px;top:125px" width="17" height="17" viewBox="0 0 17 17"><circle cx="10.5" cy="6" r="5" fill="#fff" stroke="#1a3a80" stroke-width="1.6"/><path d="M10 3v6M9 4l1-1" stroke="#1a3a80" stroke-width="1.4"/><path d="M7 10l-6 6" stroke="#2a5ab0" stroke-width="2.2"/></svg><svg class="a" style="left:1041px;top:125px" width="17" height="17" viewBox="0 0 17 17"><rect x="5" y="4" width="7" height="10" fill="#fff" stroke="#20904a" stroke-width="1.6"/><path d="M2 1v6M14 1v6" stroke="#e02020" stroke-width="1.3" stroke-dasharray="1.5 1"/><path d="M1 4h3M13 4h3" stroke="#1a3a80" stroke-width="1.3"/></svg><svg class="a" style="left:1065px;top:125px" width="17" height="17" viewBox="0 0 17 17"><rect x="1" y="1" width="15" height="15" fill="#d0d4dc" stroke="#5a6070" stroke-width="1.2"/><rect x="3" y="3" width="11" height="9" fill="#606a7a"/><path d="M5 5h1M8 5h1M11 5h1M5 8h1M8 8h2M11 8h1" stroke="#fff" stroke-width="1.4"/><path d="M17 12.5V17H12.5Z" fill="#000"/></svg><svg class="a" style="left:1088px;top:125px" width="17" height="17" viewBox="0 0 17 17"><path d="M2 15l12-13M3 2l12 13" stroke="#2a4a84" stroke-width="2.4"/><circle cx="3" cy="3" r="2.4" fill="none" stroke="#2a4a84" stroke-width="1.4"/><path d="M12 1l4 1-2 3" stroke="#4a6aa8" stroke-width="2" fill="none"/><path d="M17 12.5V17H12.5Z" fill="#000"/></svg><svg class="a" style="left:1110px;top:125px" width="17" height="17" viewBox="0 0 17 17"><rect x="0" y="0" width="4" height="3" fill="#e02020"/><rect x="13" y="0" width="4" height="3" fill="#20a040"/><rect x="0" y="13" width="4" height="4" fill="#f0e040"/><rect x="13" y="13" width="4" height="4" fill="#2050d0"/><path d="M3 3h11v7q0 4-5.5 5Q3 14 3 10z" fill="#20904a"/><circle cx="8.5" cy="8.5" r="3" fill="#e8f0f0" stroke="#3a5a90"/></svg><div class="a" style="left:182px;top:123px;width:2px;height:20px;border-left:1px solid #c5c2b0;border-right:1px solid #fff"></div><div class="a" style="left:326px;top:123px;width:2px;height:20px;border-left:1px solid #c5c2b0;border-right:1px solid #fff"></div><div class="a" style="left:695px;top:123px;width:2px;height:20px;border-left:1px solid #c5c2b0;border-right:1px solid #fff"></div></body></html>
